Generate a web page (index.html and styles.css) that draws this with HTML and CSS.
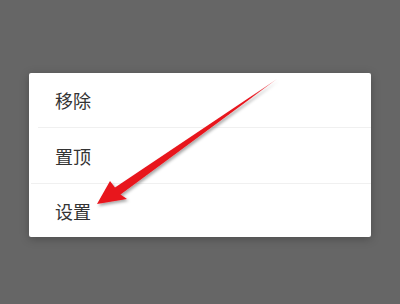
FILE: index.html
```html
<!DOCTYPE html>
<html>
<head>
<meta charset="utf-8">
<link rel="stylesheet" href="styles.css">
</head>
<body>
<div class="card">
  <div class="item">移除</div>
  <div class="item sep1">置顶</div>
  <div class="item sep2">设置</div>
</div>
<svg class="arrow" width="400" height="304" viewBox="0 0 400 304">
  <defs>
    <filter id="sh" x="-20%" y="-20%" width="140%" height="140%">
      <feDropShadow dx="1.5" dy="2" stdDeviation="1.5" flood-color="#000" flood-opacity="0.35"/>
    </filter>
    <linearGradient id="g" x1="276" y1="80" x2="96" y2="203" gradientUnits="userSpaceOnUse">
      <stop offset="0" stop-color="#f08a90"/>
      <stop offset="0.15" stop-color="#e8141c"/>
      <stop offset="1" stop-color="#e8141c"/>
    </linearGradient>
  </defs>
  <polygon filter="url(#sh)" fill="url(#g)" points="277,79 120.5,194.5 127,199 97,204 110,181 115,187.5"/>
</svg>
</body>
</html>
```
FILE: styles.css
```css
html, body {
  margin: 0;
  padding: 0;
}
body {
  width: 400px;
  height: 304px;
  background: #666666;
  position: relative;
  overflow: hidden;
  font-family: "Noto Sans CJK SC", "Noto Sans", sans-serif;
}
.card {
  position: relative;
  margin-left: 29px;
  margin-top: 0;
  top: 73px;
  width: 342px;
  height: 164px;
  background: #ffffff;
  border-radius: 2px;
  box-shadow: 0 2px 10px rgba(0, 0, 0, 0.25);
  display: flex;
  flex-direction: column;
}
.item {
  height: 54px;
  display: flex;
  align-items: center;
  padding-left: 26px;
  font-size: 18px;
  color: #333333;
  box-sizing: border-box;
}
.sep1 {
  height: 56px;
  border-top: 1px solid #f0f0f0;
  margin-left: 9px;
  padding-left: 17px;
}
.sep2 {
  border-top: 1px solid #f0f0f0;
  margin-left: 2px;
  padding-left: 24px;
}
.arrow {
  position: absolute;
  left: 0;
  top: 0;
}
```
